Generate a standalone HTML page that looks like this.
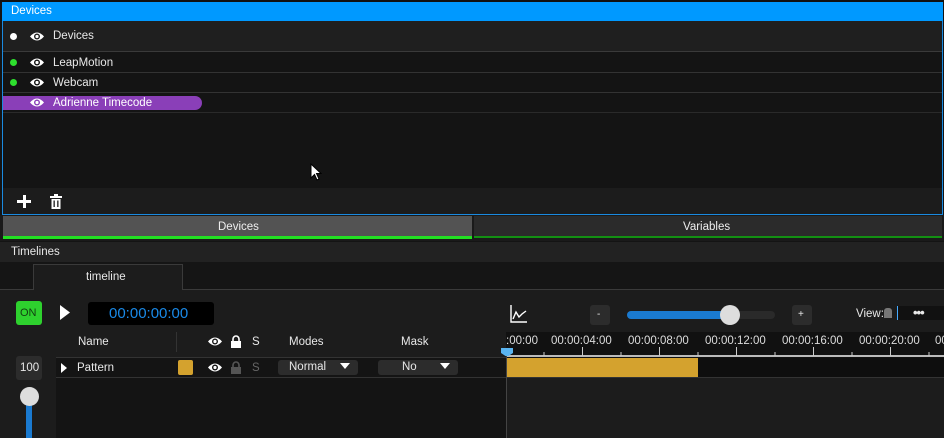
<!DOCTYPE html>
<html><head><meta charset="utf-8"><style>
*{margin:0;padding:0;box-sizing:border-box}
body{width:944px;height:438px;overflow:hidden;background:#141414;font-family:"Liberation Sans",sans-serif;color:#e8e8e8;font-size:11.5px;position:relative}
.a{position:absolute}
.t{position:absolute;white-space:nowrap}
.eye{position:absolute;width:16px;height:11px}
</style></head><body>
<div class="a" style="left:0;top:0;width:944px;height:2px;background:#111"></div>
<div class="a" style="left:2px;top:2px;width:941px;height:19px;background:#0099ff"></div>
<div class="t" style="left:11px;top:5px;font-size:11.5px;color:#fff">Devices</div>
<div class="a" style="left:2px;top:21px;width:941px;height:194px;border:1px solid #1a8ae0;border-top:none;background:#141414"></div>
<div class="a" style="left:3px;top:21px;width:939px;height:31px;background:#1f1f1f;border-bottom:1px solid #3a3a3a"></div>
<div class="a" style="left:3px;top:72px;width:939px;height:1px;background:#333"></div>
<div class="a" style="left:3px;top:92px;width:939px;height:1px;background:#333"></div>
<div class="a" style="left:3px;top:112px;width:939px;height:1px;background:#2a2a2a"></div>
<div class="a" style="left:3px;top:96px;width:199px;height:14px;background:#8a3fb8;border-radius:0 7px 7px 0"></div>
<div class="a" style="left:10px;top:33px;width:7px;height:7px;border-radius:50%;background:#fff"></div>
<div class="a" style="left:10px;top:59px;width:7px;height:7px;border-radius:50%;background:#2ee02e"></div>
<div class="a" style="left:10px;top:79px;width:7px;height:7px;border-radius:50%;background:#2ee02e"></div>
<svg class="eye" style="left:29px;top:31px" viewBox="0 0 16 11"><path d="M1 5.5Q8 -2.5 15 5.5Q8 13.5 1 5.5Z" fill="#fff"/><circle cx="8" cy="5.5" r="3" fill="#1f1f1f"/><circle cx="8" cy="5.5" r="1.6" fill="#fff"/></svg>
<svg class="eye" style="left:29px;top:57px" viewBox="0 0 16 11"><path d="M1 5.5Q8 -2.5 15 5.5Q8 13.5 1 5.5Z" fill="#fff"/><circle cx="8" cy="5.5" r="3" fill="#141414"/><circle cx="8" cy="5.5" r="1.6" fill="#fff"/></svg>
<svg class="eye" style="left:29px;top:77px" viewBox="0 0 16 11"><path d="M1 5.5Q8 -2.5 15 5.5Q8 13.5 1 5.5Z" fill="#fff"/><circle cx="8" cy="5.5" r="3" fill="#141414"/><circle cx="8" cy="5.5" r="1.6" fill="#fff"/></svg>
<svg class="eye" style="left:29px;top:97px" viewBox="0 0 16 11"><path d="M1 5.5Q8 -2.5 15 5.5Q8 13.5 1 5.5Z" fill="#fff"/><circle cx="8" cy="5.5" r="3" fill="#8a3fb8"/><circle cx="8" cy="5.5" r="1.6" fill="#fff"/></svg>
<div class="t" style="left:53px;top:30px">Devices</div>
<div class="t" style="left:53px;top:57px">LeapMotion</div>
<div class="t" style="left:53px;top:77px">Webcam</div>
<div class="t" style="left:53px;top:97px;color:#fff">Adrienne Timecode</div>
<svg class="a" style="left:310px;top:163px" width="12" height="18" viewBox="0 0 12 18"><path d="M1 1V15L4.5 11.5L7 17L9 16L6.5 10.5H11Z" fill="#fff" stroke="#000" stroke-width="1"/></svg>
<div class="a" style="left:3px;top:188px;width:939px;height:26px;background:#1c1c1c"></div>
<div class="a" style="left:17px;top:200px;width:14px;height:3px;background:#fff"></div>
<div class="a" style="left:22.5px;top:195px;width:3px;height:13px;background:#fff"></div>
<svg class="a" style="left:50px;top:194px" width="12" height="15" viewBox="0 0 12 15"><rect x="0" y="2" width="12" height="2" fill="#fff"/><rect x="4" y="0" width="4" height="2" fill="#fff"/><path d="M1.5 5H10.5V15H1.5Z" fill="#fff"/><rect x="3.5" y="6.5" width="1.3" height="6.5" fill="#1c1c1c"/><rect x="7.2" y="6.5" width="1.3" height="6.5" fill="#1c1c1c"/></svg>
<div class="a" style="left:0;top:215px;width:944px;height:26px;background:#1a1a1a"></div>
<div class="a" style="left:3px;top:216px;width:469px;height:20px;background:#535353"></div>
<div class="a" style="left:3px;top:236px;width:469px;height:3px;background:#22e022"></div>
<div class="a" style="left:474px;top:216px;width:468px;height:20px;background:#2b2b2b"></div>
<div class="a" style="left:474px;top:236px;width:468px;height:2px;background:#139013"></div>
<div class="t" style="left:218px;top:221px;color:#eee">Devices</div>
<div class="t" style="left:683px;top:221px;color:#eee">Variables</div>
<div class="a" style="left:0;top:242px;width:944px;height:20px;background:#222"></div>
<div class="t" style="left:11px;top:246px">Timelines</div>
<div class="a" style="left:0;top:262px;width:944px;height:27px;background:#151515"></div>
<div class="a" style="left:33px;top:264px;width:150px;height:26px;background:#1c1c1c;border:1px solid #3a3a3a;border-bottom:none"></div>
<div class="t" style="left:86px;top:271px">timeline</div>
<div class="a" style="left:0;top:289px;width:944px;height:149px;background:#1c1c1c;border-top:1px solid #3a3a3a"></div>
<div class="a" style="left:34px;top:289px;width:148px;height:1px;background:#1c1c1c"></div>
<div class="a" style="left:16px;top:301px;width:26px;height:24px;background:#2ed12e;border-radius:3px"></div>
<div class="t" style="left:20px;top:307px;color:#124012;font-size:11px">ON</div>
<svg class="a" style="left:60px;top:305px" width="10" height="15"><path d="M0 0L10 7.5L0 15Z" fill="#fff"/></svg>
<div class="a" style="left:88px;top:302px;width:126px;height:23px;background:#000;border-radius:3px"></div>
<div class="t" style="left:109px;top:305px;color:#1a8ae8;font-size:15px">00:00:00:00</div>
<div class="t" style="left:78px;top:336px">Name</div>
<div class="a" style="left:176px;top:332px;width:1px;height:20px;background:#333"></div>
<svg class="eye" style="left:207px;top:336px" viewBox="0 0 16 11"><path d="M1 5.5Q8 -2.5 15 5.5Q8 13.5 1 5.5Z" fill="#fff"/><circle cx="8" cy="5.5" r="3" fill="#1c1c1c"/><circle cx="8" cy="5.5" r="1.6" fill="#fff"/></svg>
<svg class="a" style="left:231px;top:335px" width="10" height="13"><path d="M2 6V4A3 3 0 0 1 8 4V6" stroke="#fff" stroke-width="1.6" fill="none"/><rect x="0" y="6" width="10" height="7" fill="#fff"/></svg>
<div class="t" style="left:252px;top:336px">S</div>
<div class="t" style="left:289px;top:336px">Modes</div>
<div class="t" style="left:401px;top:336px">Mask</div>
<div class="a" style="left:16px;top:356px;width:26px;height:24px;background:#2c2c2c;border-radius:3px"></div>
<div class="t" style="left:20px;top:362px">100</div>
<div class="a" style="left:26px;top:398px;width:6px;height:40px;background:#1a7ad0"></div>
<div class="a" style="left:20px;top:387px;width:19px;height:19px;border-radius:50%;background:#ddd"></div>
<div class="a" style="left:56px;top:357px;width:450px;height:1px;background:#333"></div>
<div class="a" style="left:56px;top:358px;width:450px;height:80px;background:#141414"></div>
<div class="a" style="left:56px;top:377px;width:450px;height:1px;background:#333"></div>
<svg class="a" style="left:61px;top:363px" width="6" height="10"><path d="M0 0L6 5L0 10Z" fill="#fff"/></svg>
<div class="t" style="left:77px;top:362px">Pattern</div>
<div class="a" style="left:178px;top:360px;width:15px;height:15px;background:#d4a22e;border-radius:2px"></div>
<svg class="eye" style="left:207px;top:362px" viewBox="0 0 16 11"><path d="M1 5.5Q8 -2.5 15 5.5Q8 13.5 1 5.5Z" fill="#fff"/><circle cx="8" cy="5.5" r="3" fill="#141414"/><circle cx="8" cy="5.5" r="1.6" fill="#fff"/></svg>
<svg class="a" style="left:231px;top:361px" width="10" height="13"><path d="M2 6V4A3 3 0 0 1 8 4V6" stroke="#555" stroke-width="1.6" fill="none"/><rect x="0" y="6" width="10" height="7" fill="#555"/></svg>
<div class="t" style="left:252px;top:362px;color:#666">S</div>
<div class="a" style="left:278px;top:360px;width:80px;height:15px;background:#2c2c2c;border-radius:3px"></div>
<div class="t" style="left:289px;top:361px">Normal</div>
<svg class="a" style="left:340px;top:363px" width="10" height="6"><path d="M0 0H10L5 6Z" fill="#fff"/></svg>
<div class="a" style="left:378px;top:360px;width:80px;height:15px;background:#2c2c2c;border-radius:3px"></div>
<div class="t" style="left:402px;top:361px">No</div>
<svg class="a" style="left:440px;top:363px" width="10" height="6"><path d="M0 0H10L5 6Z" fill="#fff"/></svg>
<svg class="a" style="left:510px;top:305px" width="18" height="18"><path d="M1 0V17H17" stroke="#fff" stroke-width="1.4" fill="none"/><path d="M3 14L6 7L9 12L12 9L16 6" stroke="#fff" stroke-width="1.4" fill="none"/></svg>
<div class="a" style="left:590px;top:305px;width:20px;height:20px;background:#2c2c2c;border-radius:3px"></div>
<div class="t" style="left:597px;top:309px;font-size:10px">-</div>
<div class="a" style="left:627px;top:311px;width:148px;height:8px;background:#2a2a2a;border-radius:4px"></div>
<div class="a" style="left:627px;top:311px;width:103px;height:8px;background:#1a7ad0;border-radius:4px"></div>
<div class="a" style="left:720px;top:305px;width:20px;height:20px;border-radius:50%;background:#ddd"></div>
<div class="a" style="left:792px;top:305px;width:20px;height:20px;background:#2c2c2c;border-radius:3px"></div>
<div class="t" style="left:798px;top:309px;font-size:10px">+</div>
<div class="t" style="left:856px;top:308px">View:</div>
<div class="a" style="left:884px;top:308px;width:8px;height:10px;background:#777;border-radius:3px 3px 0 0"></div>
<div class="a" style="left:897px;top:306px;width:1px;height:14px;background:#4af"></div>
<div class="a" style="left:898px;top:306px;width:46px;height:14px;background:#111"></div>
<div class="t" style="left:913px;top:305px;font-size:13px;font-weight:bold;letter-spacing:-1px">•••</div>
<div class="a" style="left:506px;top:332px;width:438px;height:26px;background:#111"></div>
<div class="t" style="left:506px;top:335px;color:#ddd">:00:00</div>
<div class="t" style="left:551px;top:335px;color:#ddd">00:00:04:00</div>
<div class="t" style="left:628px;top:335px;color:#ddd">00:00:08:00</div>
<div class="t" style="left:705px;top:335px;color:#ddd">00:00:12:00</div>
<div class="t" style="left:782px;top:335px;color:#ddd">00:00:16:00</div>
<div class="t" style="left:859px;top:335px;color:#ddd">00:00:20:00</div>
<div class="t" style="left:935px;top:335px;color:#ddd">00</div>
<div class="a" style="left:506px;top:355px;width:438px;height:2px;background:#bbb"></div>
<svg class="a" style="left:500px;top:345px" width="444" height="11">
<g stroke="#ccc" stroke-width="1">
<path d="M44 7V11M82.5 2V11M121 7V11M159.5 2V11M198 7V11M236.5 2V11M275 7V11M313.5 2V11M352 7V11M390.5 2V11M429 7V11"/></g>
<path d="M1 3H13V8L7 12L1 8Z" fill="#5ab4f0"/></svg>
<div class="a" style="left:506px;top:358px;width:438px;height:19px;background:#0e0e0e"></div>
<div class="a" style="left:507px;top:358px;width:191px;height:19px;background:#d4a22e"></div>
<div class="a" style="left:506px;top:377px;width:438px;height:1px;background:#333"></div>
<div class="a" style="left:506px;top:356px;width:1px;height:82px;background:#444"></div>
</body></html>
